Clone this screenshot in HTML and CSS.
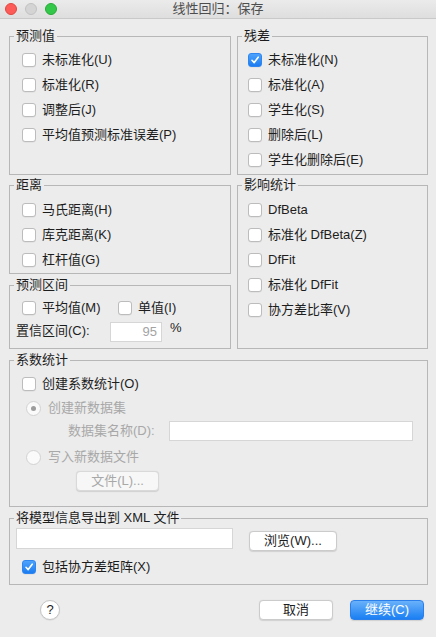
FILE: index.html
```html
<!DOCTYPE html>
<html lang="zh-CN">
<head>
    <meta charset="UTF-8">
    <meta name="viewport" content="width=device-width, initial-scale=1.0">
    <title>线性回归：保存</title>
    <link rel="stylesheet" href="styles.css">
</head>
<body>
    <div class="window">
        <div class="titlebar">
            <div class="lights">
                <span class="light red"></span>
                <span class="light idle"></span>
                <span class="light green"></span>
            </div>
            <div class="title">线性回归：保存</div>
            <div></div>
        </div>

        <div class="content">
            <div class="columns">
                <div class="col">
                    <fieldset class="group g-pred">
                        <legend>预测值</legend>
                        <div class="items">
                            <label class="check"><span class="box"></span>未标准化(U)</label>
                            <label class="check"><span class="box"></span>标准化(R)</label>
                            <label class="check"><span class="box"></span>调整后(J)</label>
                            <label class="check"><span class="box"></span>平均值预测标准误差(P)</label>
                        </div>
                    </fieldset>

                    <fieldset class="group g-dist">
                        <legend>距离</legend>
                        <div class="items pad4">
                            <label class="check"><span class="box"></span>马氏距离(H)</label>
                            <label class="check"><span class="box"></span>库克距离(K)</label>
                            <label class="check"><span class="box"></span>杠杆值(G)</label>
                        </div>
                    </fieldset>

                    <fieldset class="group g-int">
                        <legend>预测区间</legend>
                        <div class="items">
                            <div class="inline-row">
                                <label class="check first"><span class="box"></span>平均值(M)</label>
                                <label class="check"><span class="box"></span>单值(I)</label>
                            </div>
                        </div>
                        <div class="conf-row">
                            <span class="conf-label">置信区间(C):</span>
                            <span class="field small">95</span>
                            <span class="pct">%</span>
                        </div>
                    </fieldset>
                </div>

                <div class="col">
                    <fieldset class="group g-resid">
                        <legend>残差</legend>
                        <div class="items right">
                            <label class="check"><span class="box on"><svg viewBox="0 0 14 14" width="14" height="14"><path d="M4 7.3 L6.2 9.6 L10.2 4.2" fill="none" stroke="#fff" stroke-width="1.6" stroke-linecap="round" stroke-linejoin="round"/></svg></span>未标准化(N)</label>
                            <label class="check"><span class="box"></span>标准化(A)</label>
                            <label class="check"><span class="box"></span>学生化(S)</label>
                            <label class="check"><span class="box"></span>删除后(L)</label>
                            <label class="check"><span class="box"></span>学生化删除后(E)</label>
                        </div>
                    </fieldset>

                    <fieldset class="group g-infl">
                        <legend>影响统计</legend>
                        <div class="items right pad4">
                            <label class="check"><span class="box"></span>DfBeta</label>
                            <label class="check"><span class="box"></span>标准化 DfBeta(Z)</label>
                            <label class="check"><span class="box"></span>DfFit</label>
                            <label class="check"><span class="box"></span>标准化 DfFit</label>
                            <label class="check"><span class="box"></span>协方差比率(V)</label>
                        </div>
                    </fieldset>
                </div>
            </div>

            <fieldset class="group g-coef">
                <legend>系数统计</legend>
                <div class="items">
                    <label class="check"><span class="box"></span>创建系数统计(O)</label>
                </div>
                <div class="radio-row">
                    <span class="radio sel"></span><span class="dim">创建新数据集</span>
                </div>
                <div class="name-row">
                    <span class="dim name-label">数据集名称(D):</span>
                    <span class="field wide"></span>
                </div>
                <div class="radio-row second">
                    <span class="radio"></span><span class="dim">写入新数据文件</span>
                </div>
                <div class="file-row">
                    <span class="btn disabled">文件(L)...</span>
                </div>
            </fieldset>

            <fieldset class="group g-xml">
                <legend>将模型信息导出到 XML 文件</legend>
                <div class="xml-row">
                    <span class="field xml"></span>
                    <span class="btn browse">浏览(W)...</span>
                </div>
                <div class="items">
                    <label class="check"><span class="box on"><svg viewBox="0 0 14 14" width="14" height="14"><path d="M4 7.3 L6.2 9.6 L10.2 4.2" fill="none" stroke="#fff" stroke-width="1.6" stroke-linecap="round" stroke-linejoin="round"/></svg></span>包括协方差矩阵(X)</label>
                </div>
            </fieldset>

            <div class="footer">
                <span class="help">?</span>
                <span class="spacer"></span>
                <span class="btn action">取消</span>
                <span class="btn action primary">继续(C)</span>
            </div>
        </div>
    </div>
</body>
</html>
```

FILE: styles.css
```css
body {
    margin: 0;
    background: #ececec;
    font-family: "Liberation Sans", "Noto Sans CJK SC", sans-serif;
    font-size: 13px;
    line-height: 16px;
    color: #1d1d1d;
}
.window {
    width: 436px;
    height: 637px;
    background: #ececec;
}
.titlebar {
    display: grid;
    grid-template-columns: 1fr auto 1fr;
    align-items: center;
    height: 18px;
    border-bottom: 1px solid #c9c9c9;
    background: linear-gradient(to bottom, #ebebeb, #dedede);
}
.lights {
    display: flex;
    gap: 8px;
    padding-left: 5px;
}
.light {
    width: 12px;
    height: 12px;
    border-radius: 50%;
    box-sizing: border-box;
}
.light.red {
    background: #fc5b57;
    border: 1px solid #e2463f;
}
.light.idle {
    background: #d4d4d4;
    border: 1px solid #c2c2c2;
}
.light.green {
    background: #34c84a;
    border: 1px solid #27aa35;
}
.title {
    color: #4d4d4d;
    font-size: 13px;
}
.content {
    padding: 9px 8px 0 9px;
}
.columns {
    display: grid;
    grid-template-columns: 222px 191px;
    gap: 6px;
}
.group {
    margin: 0;
    padding: 0 0 0 4px;
    border: 1px solid #b7b7b7;
    box-sizing: border-box;
    min-width: 0;
}
.group legend {
    padding: 0 2px;
    line-height: 16px;
}
.g-pred { height: 147px; }
.g-dist { height: 97px; margin-top: 2px; }
.g-int { height: 72px; margin-top: 3px; }
.g-resid { height: 147px; }
.g-infl { height: 172px; margin-top: 2px; }
.g-coef { height: 155px; margin-top: 3px; }
.g-xml { height: 75px; margin-top: 3px; }

.items {
    padding: 3px 0 0 8px;
}
.items.pad4 {
    padding-top: 4px;
}
.items.right {
    padding-left: 6px;
}
.check {
    display: flex;
    align-items: center;
    height: 25px;
    white-space: nowrap;
}
.box {
    width: 14px;
    height: 14px;
    box-sizing: border-box;
    border: 1px solid #bcbcbc;
    border-radius: 3px;
    background: #fff;
    margin-right: 6px;
    flex: none;
    box-shadow: 0 0.5px 0.5px rgba(0, 0, 0, 0.08);
}
.box.on {
    border-color: #2f86f0;
    background: linear-gradient(to bottom, #4ea3fb, #1c7cf1);
}
.box svg {
    display: block;
    margin: -1px;
}
.inline-row {
    display: flex;
    height: 24px;
}
.inline-row .check {
    height: 24px;
}
.check.first {
    width: 96px;
}
.conf-row {
    display: flex;
    align-items: center;
    height: 24px;
    padding-left: 2px;
}
.conf-label {
    width: 94px;
    margin-top: -3px;
}
.field {
    display: block;
    box-sizing: border-box;
    background: #fff;
    border: 1px solid #d6d6d6;
    height: 20px;
}
.field.small {
    width: 52px;
    text-align: right;
    padding-right: 4px;
    color: #a3a3a3;
    line-height: 18px;
}
.pct {
    margin-left: 8px;
    margin-top: -8px;
}
.radio-row {
    display: flex;
    align-items: center;
    height: 24px;
    padding-left: 12px;
}
.radio-row.second {
    margin-top: 4px;
}
.radio {
    width: 15px;
    height: 15px;
    box-sizing: border-box;
    border: 1px solid #d2d2d2;
    border-radius: 50%;
    background: #fafafa;
    margin-right: 7px;
    display: flex;
    align-items: center;
    justify-content: center;
}
.radio.sel::after {
    content: "";
    width: 5px;
    height: 5px;
    border-radius: 50%;
    background: #9d9d9d;
}
.dim {
    color: #a8a8a8;
}
.name-row {
    display: flex;
    align-items: center;
    height: 21px;
}
.name-label {
    width: 101px;
    padding-left: 54px;
}
.field.wide {
    width: 244px;
}
.file-row {
    display: flex;
    align-items: center;
    height: 23px;
    padding-left: 62px;
}
.btn {
    display: flex;
    align-items: center;
    justify-content: center;
    box-sizing: border-box;
    height: 20px;
    background: #fff;
    border: 1px solid #cbcbcb;
    border-radius: 4px;
    box-shadow: 0 0.5px 1px rgba(0, 0, 0, 0.12);
}
.btn.disabled {
    width: 83px;
    color: #a8a8a8;
    background: #f7f7f7;
    border-color: #d9d9d9;
}
.xml-row {
    display: flex;
    align-items: center;
    height: 25px;
    padding-left: 2px;
}
.field.xml {
    width: 217px;
    height: 21px;
}
.btn.browse {
    width: 88px;
    margin-left: 16px;
    margin-top: 4px;
}
.footer {
    display: flex;
    align-items: center;
    margin-top: 15px;
    padding: 0 4px 0 31px;
    height: 20px;
}
.help {
    width: 20px;
    height: 20px;
    box-sizing: border-box;
    border: 1px solid #c6c6c6;
    border-radius: 50%;
    background: #fff;
    display: flex;
    align-items: center;
    justify-content: center;
    font-size: 13px;
    box-shadow: 0 0.5px 1px rgba(0, 0, 0, 0.1);
}
.spacer {
    flex: 1;
}
.btn.action {
    width: 74px;
}
.btn.primary {
    margin-left: 17px;
    color: #fff;
    border-color: #2a7fea;
    background: linear-gradient(to bottom, #69b1fa, #1a7ff3);
}
```
